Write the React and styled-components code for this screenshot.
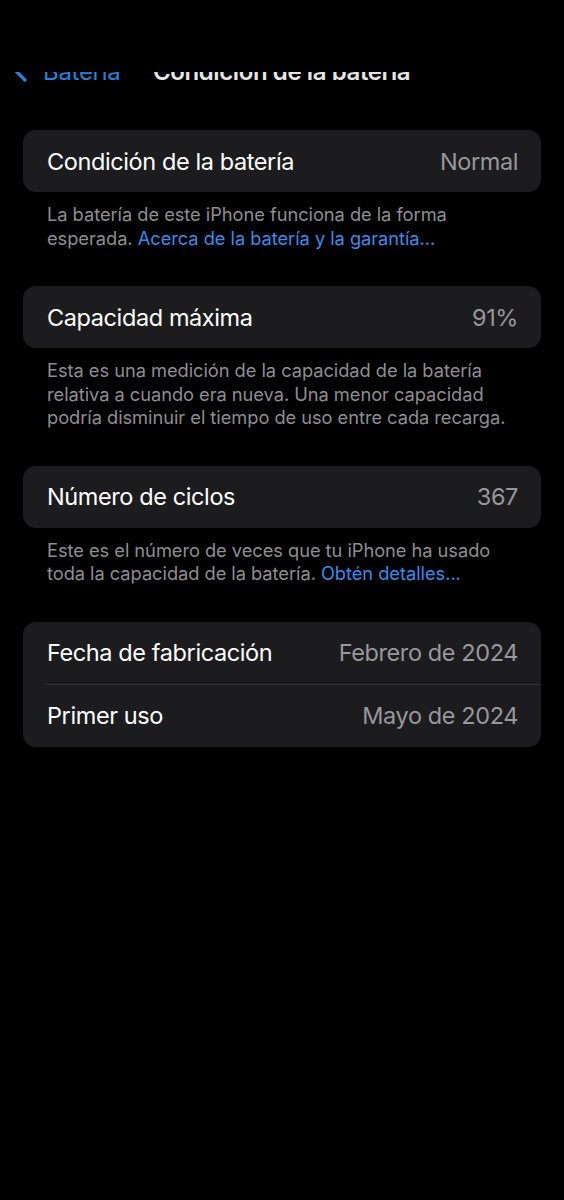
import React from "react";
import styled, { createGlobalStyle } from "styled-components";

const GlobalStyle = createGlobalStyle`
  html, body {
    margin: 0;
    padding: 0;
    background: #000000;
  }
  body {
    font-family: Inter, "Noto Sans", "Liberation Sans", sans-serif;
    -webkit-font-smoothing: antialiased;
  }
`;

const Screen = styled.div`
  min-height: 1200px;
  background: #000000;
  padding-top: 72px;
  box-sizing: border-box;
`;

// the nav bar is scrolled under the status area, only its lower edge shows
const NavClip = styled.div`
  height: 12px;
  overflow: hidden;
`;

const NavRow = styled.div`
  height: 12px;
  display: flex;
  align-items: flex-end;
  padding-left: 13px;
`;

const BackButton = styled.div`
  display: flex;
  align-items: flex-end;
  gap: 16px;
  color: #2a80dc;
  font-size: 24px;
  line-height: 24px;
  letter-spacing: -0.3px;
  width: 140px;
  svg {
    margin-bottom: 2px;
  }
`;

const NavTitle = styled.div`
  color: #e6e6e6;
  font-size: 24px;
  line-height: 24px;
  font-weight: 600;
  letter-spacing: -0.4px;
`;

const Content = styled.div`
  display: flex;
  flex-direction: column;
  padding: 46px 23px 0;
`;

const Section = styled.section`
  display: flex;
  flex-direction: column;
  margin-bottom: 36px;
`;

const Card = styled.div`
  background: #1c1c1e;
  border-radius: 13px;
  overflow: hidden;
`;

const Row = styled.div`
  height: 62px;
  display: flex;
  align-items: center;
  justify-content: space-between;
  padding: 0 23px 0 24px;

  & + & {
    border-top: 1px solid #333336;
    margin-left: 24px;
    padding-left: 0;
  }
`;

const Label = styled.span`
  color: #ffffff;
  font-size: 23.5px;
  letter-spacing: -0.4px;
`;

const Value = styled.span`
  color: #97979c;
  font-size: 23.5px;
  letter-spacing: -0.4px;
`;

const Footer = styled.p`
  margin: 0;
  padding: 11px 24px 0;
  color: #8e8e93;
  font-size: 18.3px;
  line-height: 23.5px;
  letter-spacing: -0.05px;
`;

const Link = styled.span`
  color: #3a8cea;
`;

const Chevron = () => (
  <svg width="14" height="24" viewBox="0 0 14 24" fill="none">
    <path
      d="M12 2 L2 12 L12 22"
      stroke="#2a80dc"
      strokeWidth="3.2"
      strokeLinecap="round"
      strokeLinejoin="round"
    />
  </svg>
);

const sections = [
  {
    rows: [["Condición de la batería", "Normal"]],
    text: "La batería de este iPhone funciona de la forma esperada. ",
    link: "Acerca de la batería y la garantía...",
  },
  {
    rows: [["Capacidad máxima", "91%"]],
    text:
      "Esta es una medición de la capacidad de la batería relativa a cuando era nueva. Una menor capacidad podría disminuir el tiempo de uso entre cada recarga.",
  },
  {
    rows: [["Número de ciclos", "367"]],
    text:
      "Este es el número de veces que tu iPhone ha usado toda la capacidad de la batería. ",
    link: "Obtén detalles...",
  },
  {
    rows: [
      ["Fecha de fabricación", "Febrero de 2024"],
      ["Primer uso", "Mayo de 2024"],
    ],
  },
];

export default function App() {
  return (
    <>
      <GlobalStyle />
      <Screen>
        <NavClip>
          <NavRow>
            <BackButton>
              <Chevron />
              <span>Batería</span>
            </BackButton>
            <NavTitle>Condición de la batería</NavTitle>
          </NavRow>
        </NavClip>
        <Content>
          {sections.map((s, i) => (
            <Section key={i}>
              <Card>
                {s.rows.map(([label, value]) => (
                  <Row key={label}>
                    <Label>{label}</Label>
                    <Value>{value}</Value>
                  </Row>
                ))}
              </Card>
              {s.text && (
                <Footer>
                  {s.text}
                  {s.link && <Link>{s.link}</Link>}
                </Footer>
              )}
            </Section>
          ))}
        </Content>
      </Screen>
    </>
  );
}
